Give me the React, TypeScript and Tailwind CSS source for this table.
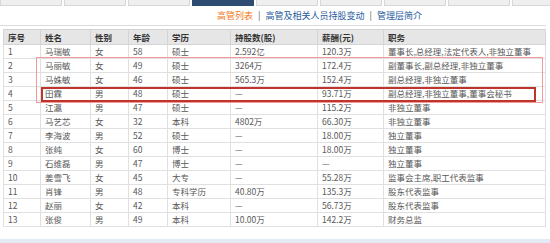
import React from "react";

const rows: string[][] = [
  ["1", "马瑞敏", "女", "58", "硕士", "2.592亿", "120.3万", "董事长,总经理,法定代表人,非独立董事"],
  ["2", "马丽敏", "女", "49", "硕士", "3264万", "172.4万", "副董事长,副总经理,非独立董事"],
  ["3", "马姝敏", "女", "46", "硕士", "565.3万", "152.4万", "副总经理,非独立董事"],
  ["4", "田霖", "男", "48", "硕士", "—", "93.71万", "副总经理,非独立董事,董事会秘书"],
  ["5", "江瀛", "男", "47", "硕士", "—", "115.2万", "非独立董事"],
  ["6", "马艺芯", "女", "32", "本科", "4802万", "66.30万", "非独立董事"],
  ["7", "李海波", "男", "52", "硕士", "—", "18.00万", "独立董事"],
  ["8", "张纯", "女", "60", "博士", "—", "18.00万", "独立董事"],
  ["9", "石维磊", "男", "47", "博士", "—", "—", "独立董事"],
  ["10", "姜雪飞", "女", "45", "大专", "—", "55.28万", "监事会主席,职工代表监事"],
  ["11", "肖锋", "男", "48", "专科学历", "40.80万", "135.3万", "股东代表监事"],
  ["12", "赵丽", "女", "42", "本科", "—", "56.73万", "股东代表监事"],
  ["13", "张俊", "男", "49", "本科", "10.00万", "142.2万", "财务总监"],
];

const headers = ["序号", "姓名", "性别", "年龄", "学历", "持股数(股)", "薪酬(元)", "职务"];
const widths = [37, 50, 38, 39, 63, 87, 66, 162];

export default function App() {
  const font = { fontFamily: '"Noto Sans CJK SC", "Liberation Sans", sans-serif' };
  return (
    <div className="relative w-[550px] h-[243px] bg-white overflow-hidden" style={font}>
      {/* tabs */}
      <div className="flex gap-[2px] h-[6px]">
        {Array.from({ length: 9 }).map((_, i) => (
          <div
            key={i}
            className={
              i === 3
                ? "w-[62px] h-full bg-[#2e4b72] shrink-0"
                : "w-[62px] h-full bg-[#efefef] border border-t-0 border-[#d6d6d6] shrink-0"
            }
          />
        ))}
      </div>
      {/* links */}
      <div className="h-[20px] flex items-center pl-[217px] text-[9px] leading-none border-b border-[#dcdcdc] w-[546px]">
        <span className="text-[#f07818]">高管列表</span>
        <span className="text-[#555] mx-[5px]">|</span>
        <span className="text-[#1f5a9e]">高管及相关人员持股变动</span>
        <span className="text-[#555] mx-[5px]">|</span>
        <span className="text-[#1f5a9e]">管理层简介</span>
      </div>
      {/* table */}
      <div className="pt-[3px] pl-[3px]">
        <table className="border-collapse table-fixed w-[542px] text-[8.5px] leading-none">
          <colgroup>
            {widths.map((w, i) => (
              <col key={i} style={{ width: w }} />
            ))}
          </colgroup>
          <thead>
            <tr className="h-[15px] bg-[#e6e6e6]">
              {headers.map((h) => (
                <th key={h} className="border border-[#d4d4d4] text-left font-bold text-[#333] pl-[4px] py-0">
                  {h}
                </th>
              ))}
            </tr>
          </thead>
          <tbody>
            {rows.map((r) => (
              <tr key={r[0]} className="h-[14px]">
                {r.map((c, j) => (
                  <td
                    key={j}
                    className="border border-[#e0e0e0] text-left text-[#585858] pl-[4px] py-0 whitespace-nowrap overflow-hidden"
                  >
                    {c}
                  </td>
                ))}
              </tr>
            ))}
          </tbody>
        </table>
      </div>
      {/* highlight boxes */}
      <div className="absolute left-[36px] top-[57px] w-[507px] h-[46px] border border-[#f29a9a]" />
      <div className="absolute left-[41px] top-[87px] w-[495px] h-[15px] border-2 border-[#c0352b]" />
      {/* bottom band */}
      <div className="absolute left-0 bottom-0 w-full h-[4px] bg-[#e3ecf5]" />
    </div>
  );
}
